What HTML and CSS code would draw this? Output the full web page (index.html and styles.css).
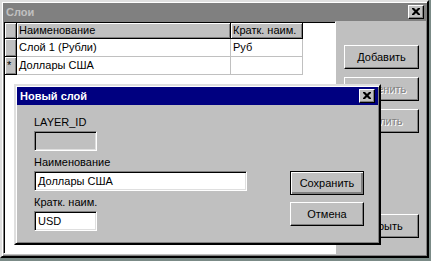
FILE: index.html
```html
<!DOCTYPE html>
<html>
<head>
    <meta charset="UTF-8">
    <title>Слои</title>
    <link rel="stylesheet" href="styles.css">
</head>
<body>
    <div class="window">
        <div class="titlebar inactive">
            <span class="title">Слои</span>
            <div class="close-btn">
                <svg width="8" height="7" viewBox="0 0 8 7"><path d="M0 0h2l2 2 2-2h2v1L5.5 3.5 8 6v1H6L4 5 2 7H0V6l2.5-2.5L0 1z" fill="#000"/></svg>
            </div>
        </div>
        <div class="window-body">
            <div class="grid">
                <div class="grid-row grid-head">
                    <div class="cell indicator"></div>
                    <div class="cell">Наименование</div>
                    <div class="cell">Кратк. наим.</div>
                </div>
                <div class="grid-row">
                    <div class="cell indicator"></div>
                    <div class="cell">Слой 1 (Рубли)</div>
                    <div class="cell">Руб</div>
                </div>
                <div class="grid-row">
                    <div class="cell indicator">*</div>
                    <div class="cell">Доллары США</div>
                    <div class="cell"></div>
                </div>
            </div>
            <div class="side-buttons">
                <div class="btn">Добавить</div>
                <div class="btn disabled">Изменить</div>
                <div class="btn disabled">Удалить</div>
                <div class="btn push-bottom">Закрыть</div>
            </div>
        </div>

        <!-- modal dialog over the window -->
        <div class="dialog">
            <div class="titlebar active">
                <span class="title">Новый слой</span>
                <div class="close-btn">
                    <svg width="8" height="7" viewBox="0 0 8 7"><path d="M0 0h2l2 2 2-2h2v1L5.5 3.5 8 6v1H6L4 5 2 7H0V6l2.5-2.5L0 1z" fill="#000"/></svg>
                </div>
            </div>
            <div class="dialog-body">
                <div class="fields">
                    <div class="label first">LAYER_ID</div>
                    <div class="input short disabled"></div>
                    <div class="label">Наименование</div>
                    <div class="input long">Доллары США</div>
                    <div class="label">Кратк. наим.</div>
                    <div class="input short">USD</div>
                </div>
                <div class="dialog-buttons">
                    <div class="btn default">Сохранить</div>
                    <div class="btn">Отмена</div>
                </div>
            </div>
        </div>
    </div>
</body>
</html>
```

FILE: styles.css
```css
body {
    margin: 0;
    background-color: #7b8b87;
    font-family: "Liberation Sans", Arial, sans-serif;
    font-size: 11px;
    color: #000;
}

.window {
    position: relative;
    width: 429px;
    height: 258px;
    box-sizing: border-box;
    background-color: #c0c0c0;
    padding: 1px;
    border: 2px solid;
    border-color: #dfdfdf #000 #000 #dfdfdf;
    box-shadow: inset 1px 1px #fff, inset -1px -1px #808080;
}

.titlebar {
    height: 18px;
    display: flex;
    align-items: center;
    justify-content: space-between;
    padding: 0 2px 0 3px;
}

.titlebar.inactive {
    background-color: #808080;
    color: #c0c0c0;
}

.titlebar.active {
    background-color: #000080;
    color: #fff;
}

.title {
    font-weight: bold;
    font-size: 11px;
}

.close-btn {
    width: 16px;
    height: 14px;
    box-sizing: border-box;
    background-color: #c0c0c0;
    border-top: 1px solid #fff;
    border-left: 1px solid #fff;
    border-right: 1px solid #000;
    border-bottom: 1px solid #000;
    box-shadow: inset -1px -1px #808080;
    display: flex;
    align-items: center;
    justify-content: center;
    padding: 0 1px 1px 0;
}

.window-body {
    display: flex;
    height: 233px;
}

.grid {
    width: 333px;
    height: 233px;
    box-sizing: border-box;
    background-color: #fff;
    border: 1px solid;
    border-color: #808080 #fff #fff #808080;
    box-shadow: inset 1px 1px #000;
    padding: 1px 0 0 1px;
}

.grid-row {
    display: grid;
    grid-template-columns: 12px 214px 72px;
    height: 18px;
}

.cell {
    box-sizing: border-box;
    border-right: 1px solid #c0c0c0;
    border-bottom: 1px solid #c0c0c0;
    padding-left: 2px;
    line-height: 17px;
    white-space: nowrap;
    overflow: hidden;
}

.grid-head {
    height: 16px;
}

.grid-head .cell,
.cell.indicator {
    background-color: #c0c0c0;
    border-right-color: #000;
    border-bottom-color: #000;
    box-shadow: inset 1px 1px #fff, inset -1px -1px #808080;
    line-height: 15px;
}

.cell.indicator {
    padding-left: 2px;
    font-size: 11px;
    line-height: 17px;
}

.side-buttons {
    display: flex;
    flex-direction: column;
    gap: 8px;
    margin-left: 8px;
    padding-top: 24px;
    padding-bottom: 16px;
}

.btn {
    width: 75px;
    height: 24px;
    box-sizing: border-box;
    background-color: #c0c0c0;
    border-top: 1px solid #fff;
    border-left: 1px solid #fff;
    border-right: 1px solid #000;
    border-bottom: 1px solid #000;
    box-shadow: inset -1px -1px #808080;
    display: flex;
    align-items: center;
    justify-content: center;
    padding-bottom: 1px;
}

.btn.disabled {
    color: #808080;
    text-shadow: 1px 1px #fff;
}

.btn.push-bottom {
    margin-top: auto;
}

.btn.default {
    border: 1px solid #000;
    box-shadow: inset 1px 1px #fff, inset -1px -1px #808080, inset -2px -2px #808080;
}

.dialog {
    position: absolute;
    left: 12px;
    top: 82px;
    width: 367px;
    height: 161px;
    box-sizing: border-box;
    background-color: #c0c0c0;
    padding: 1px;
    border: 2px solid;
    border-color: #dfdfdf #000 #000 #dfdfdf;
    box-shadow: inset 1px 1px #fff, inset -1px -1px #808080;
}

.dialog .titlebar {
    padding-right: 3px;
}

.dialog-body {
    display: flex;
    padding-left: 17px;
}

.fields {
    display: flex;
    flex-direction: column;
    width: 239px;
}

.label {
    line-height: 13px;
    margin-top: 5px;
    margin-bottom: 2px;
}

.label.first {
    margin-top: 11px;
}

.input {
    height: 20px;
    box-sizing: border-box;
    background-color: #fff;
    border: 1px solid;
    border-color: #808080 #fff #fff #808080;
    box-shadow: inset 1px 1px #000, inset -1px -1px #dfdfdf;
    padding: 0 3px;
    line-height: 18px;
}

.input.short {
    width: 63px;
}

.input.long {
    width: 213px;
}

.input.disabled {
    background-color: #c0c0c0;
}

.dialog-buttons {
    display: flex;
    flex-direction: column;
    gap: 7px;
    margin-left: 17px;
    padding-top: 66px;
}

.dialog-buttons .btn {
    width: 74px;
}
```
